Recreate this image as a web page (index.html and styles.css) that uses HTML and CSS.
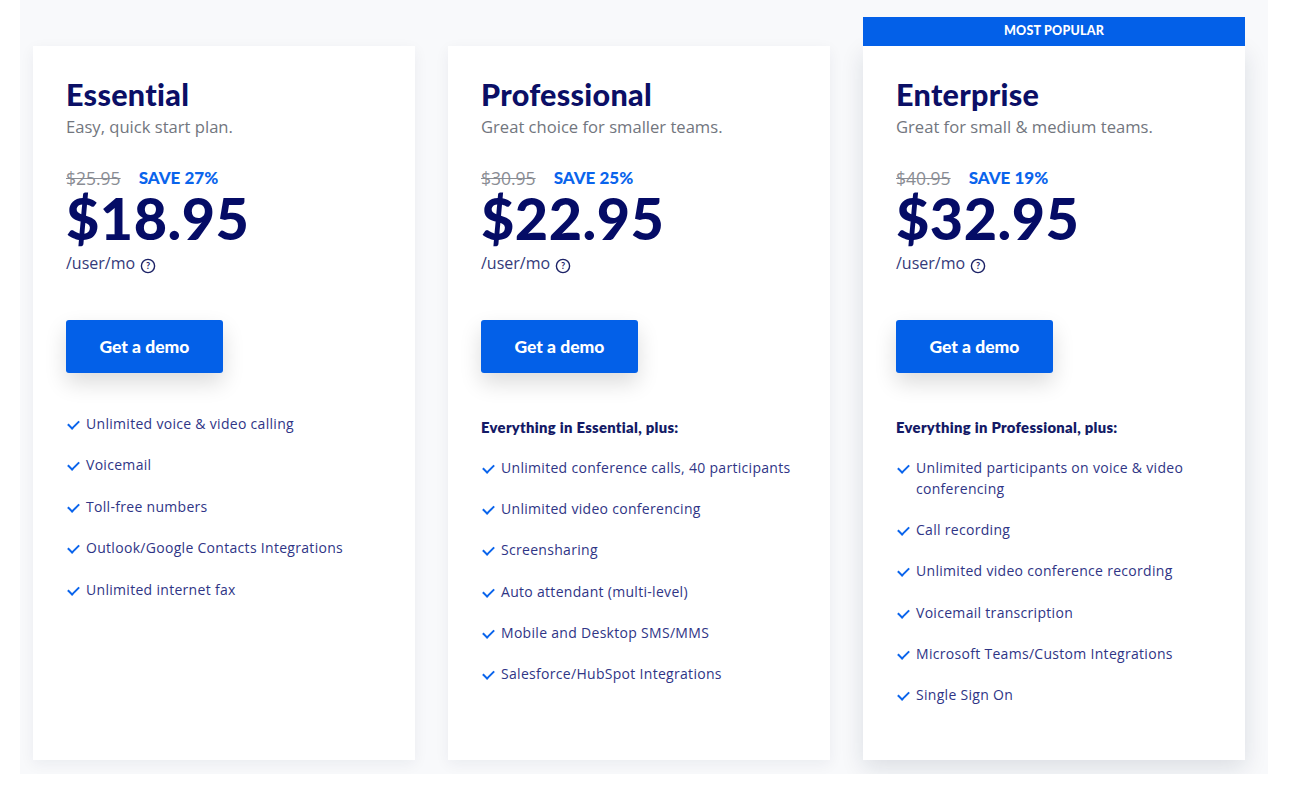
FILE: index.html
```html
<!DOCTYPE html>
<html lang="en">
<head>
    <meta charset="UTF-8">
    <meta name="viewport" content="width=device-width, initial-scale=1.0">
    <title>Pricing</title>
    <link rel="stylesheet" href="styles.css">
</head>
<body>
    <section class="pricing">
        <!-- Essential -->
        <div class="plan">
            <h2>Essential</h2>
            <p class="tagline">Easy, quick start plan.</p>
            <div class="was"><s>$25.95</s><span class="save">SAVE 27%</span></div>
            <div class="price">$18.95</div>
            <div class="unit">/user/mo <svg class="help" viewBox="0 0 16 16"><circle cx="8" cy="8" r="6.6"/><text x="8" y="11.4">?</text></svg></div>
            <a class="demo" href="#">Get a demo</a>
            <ul class="features">
                <li>Unlimited voice &amp; video calling</li>
                <li>Voicemail</li>
                <li>Toll-free numbers</li>
                <li>Outlook/Google Contacts Integrations</li>
                <li>Unlimited internet fax</li>
            </ul>
        </div>

        <!-- Professional -->
        <div class="plan">
            <h2>Professional</h2>
            <p class="tagline">Great choice for smaller teams.</p>
            <div class="was"><s>$30.95</s><span class="save">SAVE 25%</span></div>
            <div class="price">$22.95</div>
            <div class="unit">/user/mo <svg class="help" viewBox="0 0 16 16"><circle cx="8" cy="8" r="6.6"/><text x="8" y="11.4">?</text></svg></div>
            <a class="demo" href="#">Get a demo</a>
            <p class="plus">Everything in Essential, plus:</p>
            <ul class="features">
                <li>Unlimited conference calls, 40 participants</li>
                <li>Unlimited video conferencing</li>
                <li>Screensharing</li>
                <li>Auto attendant (multi-level)</li>
                <li>Mobile and Desktop SMS/MMS</li>
                <li>Salesforce/HubSpot Integrations</li>
            </ul>
        </div>

        <!-- Enterprise -->
        <div class="plan popular">
            <div class="badge">MOST POPULAR</div>
            <h2>Enterprise</h2>
            <p class="tagline">Great for small &amp; medium teams.</p>
            <div class="was"><s>$40.95</s><span class="save">SAVE 19%</span></div>
            <div class="price">$32.95</div>
            <div class="unit">/user/mo <svg class="help" viewBox="0 0 16 16"><circle cx="8" cy="8" r="6.6"/><text x="8" y="11.4">?</text></svg></div>
            <a class="demo" href="#">Get a demo</a>
            <p class="plus">Everything in Professional, plus:</p>
            <ul class="features">
                <li>Unlimited participants on voice &amp; video conferencing</li>
                <li>Call recording</li>
                <li>Unlimited video conference recording</li>
                <li>Voicemail transcription</li>
                <li>Microsoft Teams/Custom Integrations</li>
                <li>Single Sign On</li>
            </ul>
        </div>
    </section>
</body>
</html>
```

FILE: styles.css
```css
/* Pricing cards */
body {
    margin: 0;
    background: #fff;
    font-family: 'Open Sans', 'Noto Sans', sans-serif;
}

.pricing {
    margin-left: 20px;
    width: 1248px;
    box-sizing: border-box;
    padding: 46px 23px 14px 13px;
    background: #f8f9fb;
    display: flex;
    gap: 33px;
}

.plan {
    position: relative;
    width: 382px;
    height: 714px;
    box-sizing: border-box;
    padding: 30px 33px 0 33px;
    background: #fff;
    box-shadow: 0 4px 14px rgba(20, 30, 60, 0.06);
}

.plan.popular {
    box-shadow: 0 8px 22px rgba(20, 30, 60, 0.12);
}

.badge {
    position: absolute;
    left: 0;
    right: 0;
    top: -29px;
    height: 29px;
    line-height: 28px;
    background: #0360e8;
    color: #fff;
    font-family: 'Lato', sans-serif;
    font-weight: 900;
    font-size: 12.5px;
    text-align: center;
    letter-spacing: 0.2px;
}

h2 {
    margin: 0;
    font-family: 'Lato', sans-serif;
    font-weight: 900;
    font-size: 30.5px;
    line-height: 36px;
    color: #0b0f66;
    letter-spacing: 0.3px;
}

.tagline {
    margin: 4px 0 0;
    font-size: 16.6px;
    line-height: 22px;
    color: #72767e;
}

.was {
    margin-top: 30px;
    font-size: 17.5px;
    line-height: 20px;
    display: flex;
    gap: 18px;
}

.was s {
    color: #8a8d94;
}

.save {
    font-family: 'Lato', sans-serif;
    font-weight: 900;
    color: #0a64ec;
    font-size: 17px;
}

.price {
    font-family: 'Lato', sans-serif;
    font-weight: 900;
    font-size: 57.5px;
    line-height: 60px;
    color: #050c66;
    letter-spacing: 0.5px;
}

.unit {
    margin-top: 4px;
    font-size: 16px;
    line-height: 22px;
    color: #343a7a;
    display: flex;
    align-items: flex-end;
    gap: 5px;
}

.help {
    width: 16px;
    height: 16px;
}

.help circle {
    fill: none;
    stroke: #1c2266;
    stroke-width: 1.4;
}

.help text {
    font-family: 'Lato', sans-serif;
    font-weight: 700;
    font-size: 9px;
    fill: #1c2266;
    text-anchor: middle;
}

.demo {
    display: block;
    width: 157px;
    height: 53px;
    line-height: 53px;
    margin-top: 46px;
    background: #0360e8;
    border-radius: 3px;
    color: #fff;
    text-align: center;
    text-decoration: none;
    font-family: 'Lato', sans-serif;
    font-weight: 900;
    font-size: 17.5px;
    box-shadow: 0 10px 22px rgba(0, 0, 0, 0.14);
}

.plus {
    margin: 44px 0 0;
    font-family: 'Lato', sans-serif;
    font-weight: 800;
    font-size: 14.8px;
    line-height: 20px;
    color: #141a66;
    letter-spacing: 0.3px;
}

.features {
    list-style: none;
    margin: 40px 0 0;
    padding: 0;
    display: flex;
    flex-direction: column;
    gap: 20.4px;
}

.plus + .features {
    margin-top: 19.5px;
}

.features li {
    position: relative;
    padding-left: 20px;
    font-size: 14px;
    line-height: 21px;
    color: #2f3586;
    letter-spacing: 0.3px;
}

.features li::before {
    content: '';
    position: absolute;
    left: 2px;
    top: 7px;
    width: 9px;
    height: 5px;
    border-left: 2px solid #0a64ec;
    border-bottom: 2px solid #0a64ec;
    transform: rotate(-45deg);
}
```
